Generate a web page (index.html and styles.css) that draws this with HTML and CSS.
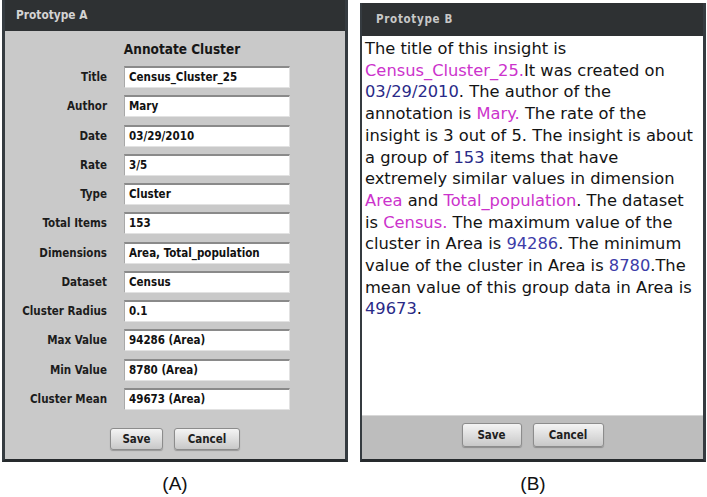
FILE: index.html
```html
<!DOCTYPE html>
<html>
<head>
<meta charset="utf-8">
<link rel="stylesheet" href="styles.css">
</head>
<body>
<div class="figure">
  <div class="panels">
    <div class="panel panel-a">
      <div class="header">Prototype A</div>
      <div class="body-a">
        <div class="form-title">Annotate Cluster</div>
        <div class="form-grid">
          <div class="lbl">Title</div><div class="inp">Census_Cluster_25</div>
          <div class="lbl">Author</div><div class="inp">Mary</div>
          <div class="lbl">Date</div><div class="inp">03/29/2010</div>
          <div class="lbl">Rate</div><div class="inp">3/5</div>
          <div class="lbl">Type</div><div class="inp">Cluster</div>
          <div class="lbl">Total Items</div><div class="inp">153</div>
          <div class="lbl">Dimensions</div><div class="inp">Area, Total_population</div>
          <div class="lbl">Dataset</div><div class="inp">Census</div>
          <div class="lbl">Cluster Radius</div><div class="inp">0.1</div>
          <div class="lbl">Max Value</div><div class="inp">94286 (Area)</div>
          <div class="lbl">Min Value</div><div class="inp">8780 (Area)</div>
          <div class="lbl">Cluster Mean</div><div class="inp">49673 (Area)</div>
        </div>
        <div class="buttons buttons-a">
          <button class="btn btn-save-a">Save</button>
          <button class="btn btn-cancel-a">Cancel</button>
        </div>
      </div>
    </div>
    <div class="panel panel-b">
      <div class="header header-b">Prototype B</div>
      <div class="text-b">The title of this insight is<br><span class="mg">Census_Cluster_25.</span>It was created on<br><span class="bl">03/29/2010</span>. The author of the<br>annotation is <span class="mg">Mary.</span> The rate of the<br>insight is 3 out of 5. The insight is about<br>a group of <span class="bl">153</span> items that have<br>extremely similar values in dimension<br><span class="mg">Area</span> and <span class="mg">Total_population</span>. The dataset<br>is <span class="mg">Census.</span> The maximum value of the<br>cluster in Area is <span class="bl2">94286</span>. The minimum<br>value of the cluster in Area is <span class="bl2">8780</span>.The<br>mean value of this group data in Area is<br><span class="bl">49673</span>.</div>
      <div class="footer-b">
        <button class="btn btn-save-b">Save</button>
        <button class="btn btn-cancel-b">Cancel</button>
      </div>
    </div>
  </div>
  <div class="captions">
    <div class="cap">(A)</div>
    <div class="cap">(B)</div>
  </div>
</div>
</body>
</html>
```

FILE: styles.css
```css
html, body {
  margin: 0;
  padding: 0;
  background: #ffffff;
}
.figure {
  width: 707px;
  height: 497px;
  display: flex;
  flex-direction: column;
}
.panels {
  display: flex;
  align-items: flex-start;
  padding-left: 2px;
  gap: 12px;
  height: 462px;
}
.panel {
  box-sizing: border-box;
  display: flex;
  flex-direction: column;
  border-left: 3px solid #353b40;
  border-right: 3px solid #353b40;
  border-bottom: 3px solid #262a2d;
}
.panel-a {
  width: 346px;
  height: 462px;
  background: #c9c9c9;
}
.panel-b {
  width: 346px;
  height: 459px;
  margin-top: 3px;
  border-left-width: 2px;
}
.header {
  height: 31px;
  background: #2e3133;
  color: #d4d4d4;
  font-family: "DejaVu Sans Condensed", "DejaVu Sans", sans-serif;
  font-weight: bold;
  font-size: 11.8px;
  line-height: 30px;
  padding-left: 11px;
  box-sizing: border-box;
  flex: none;
}
.header-b {
  height: 33px;
  line-height: 33px;
  padding-left: 14px;
  color: #c8c8c8;
  font-size: 11.5px;
  letter-spacing: 0.7px;
}
.body-a {
  flex: 1;
  display: flex;
  flex-direction: column;
  padding-top: 9px;
  font-family: "DejaVu Sans Condensed", "DejaVu Sans", sans-serif;
  font-weight: bold;
}
.form-title {
  font-size: 13.5px;
  line-height: 18px;
  color: #161616;
  padding-left: 14px;
  text-align: center;
  margin-bottom: 8px;
}
.form-grid {
  display: grid;
  grid-template-columns: 102px 166px;
  column-gap: 17px;
  row-gap: 7.27px;
  font-size: 11.5px;
}
.lbl {
  text-align: right;
  color: #1c1c1c;
  line-height: 22px;
  height: 22px;
}
.inp {
  box-sizing: border-box;
  height: 22px;
  background: #ffffff;
  border-top: 2px solid #8a8a8a;
  border-left: 1px solid #a8a8a8;
  border-right: 1px solid #e2e2e2;
  border-bottom: 1px solid #e2e2e2;
  color: #111;
  padding-left: 4px;
  line-height: 19px;
  white-space: nowrap;
  overflow: hidden;
}
.buttons {
  display: flex;
  justify-content: center;
  gap: 11px;
}
.buttons-a {
  margin-top: 18px;
}
.btn {
  box-sizing: border-box;
  font-family: "DejaVu Sans Condensed", "DejaVu Sans", sans-serif;
  font-weight: bold;
  font-size: 11.5px;
  color: #1e1e1e;
  background: linear-gradient(#f4f4f4, #dcdcdc 55%, #c8c8c8);
  border: 1px solid #8c8c8c;
  border-radius: 3px;
  box-shadow: 0 1px 1px rgba(0,0,0,0.25);
  padding: 0;
  margin: 0;
}
.btn-save-a { width: 53px; height: 22px; }
.btn-cancel-a { width: 66px; height: 22px; }
.btn-save-b { width: 60px; height: 24px; }
.btn-cancel-b { width: 71px; height: 24px; }
.text-b {
  flex: 1;
  background: #ffffff;
  padding: 2px 0 0 3px;
  font-family: "DejaVu Sans", sans-serif;
  font-size: 16.3px;
  line-height: 21.7px;
  color: #141414;
  white-space: nowrap;
  overflow: hidden;
}
.mg { color: #cc33cc; }
.bl { color: #2a2a88; }
.bl2 { color: #3c3ca8; }
.footer-b {
  height: 44px;
  flex: none;
  box-sizing: border-box;
  background: #bdbdbd;
  border-top: 1px solid #d8d8d8;
  display: flex;
  justify-content: center;
  align-items: flex-start;
  gap: 11px;
  padding-top: 7px;
}
.captions {
  display: flex;
  padding-left: 2px;
  gap: 12px;
  margin-top: 11px;
}
.cap {
  width: 346px;
  text-align: center;
  font-family: "Liberation Sans", Arial, sans-serif;
  font-size: 19px;
  line-height: 22px;
  color: #111;
}
```
